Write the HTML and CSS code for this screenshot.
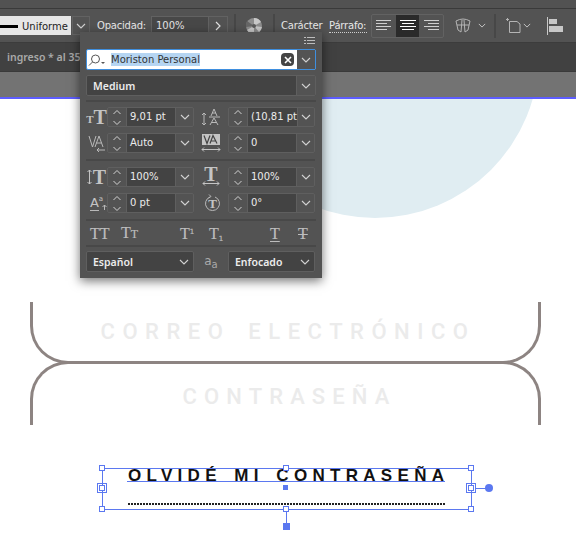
FILE: index.html
```html
<!DOCTYPE html>
<html lang="en">
<head>
  <meta charset="UTF-8">
  <title>Carácter</title>
  <link rel="stylesheet" href="styles.css">
</head>
<body>
  <svg width="0" height="0" class="defs">
    <symbol id="chev" viewBox="0 0 10 6"><path d="M1 1l4 4 4-4" fill="none" stroke="#d2d2d2" stroke-width="1.1"/></symbol>
    <symbol id="updown" viewBox="0 0 10 17"><path d="M1.500 5L5 1.500 8.500 5M1.500 12L5 15.500 8.500 12" fill="none" stroke="#d2d2d2" stroke-width="1"/></symbol>
  </svg>

  <div class="app">
    <div class="topstrip"></div>
    <div class="toolbar">
      <div class="stroke-select"><span class="stroke-line"></span>Uniforme</div>
      <div class="tool-btn"><svg width="10" height="6"><use href="#chev"/></svg></div>
      <span class="label label-opacity">Opacidad:</span>
      <div class="opacity-field">
        <span class="opacity-val">100%</span>
        <span class="opacity-arrow"><svg width="6" height="10" viewBox="0 0 6 10"><path d="M1 1l4 4-4 4" fill="none" stroke="#e0e0e0" stroke-width="1.200"/></svg></span>
      </div>
      <span class="sep ml6"></span>
      <svg class="ml10" width="16" height="16" viewBox="0 0 16 16">
        <circle cx="8" cy="8" r="8" fill="#8e8e8e"/>
        <path d="M8 8L8 0A8 8 0 0 1 15 4zM8 8L1 12A8 8 0 0 0 8 16zM8 8L16 9A8 8 0 0 1 13 14z" fill="#c9c9c9"/>
        <path d="M8 8L1 3A8 8 0 0 0 0 9z" fill="#666"/>
        <circle cx="8" cy="8" r="2" fill="#5a5a5a"/>
      </svg>
      <span class="sep ml11"></span>
      <span class="label label-char">Carácter</span>
      <span class="label label-para">Párrafo:</span>
      <div class="align-group">
        <span class="align-btn">
          <svg width="16" height="12" viewBox="0 0 16 12"><path d="M0 .5h15M0 3.500h11M0 6.500h15M0 9.500h11" stroke="#cfcfcf"/></svg>
        </span>
        <span class="align-btn active">
          <svg width="16" height="12" viewBox="0 0 16 12"><path d="M0 .5h16M2 3.500h12M0 6.500h16M2 9.500h12" stroke="#fff"/></svg>
        </span>
        <span class="align-btn">
          <svg width="16" height="12" viewBox="0 0 16 12"><path d="M1 .5h15M5 3.500h11M1 6.500h15M5 9.500h11" stroke="#cfcfcf"/></svg>
        </span>
      </div>
      <svg class="ml11" width="16" height="15" viewBox="0 0 16 15" fill="none" stroke="#b4b4b4">
        <path d="M1 3Q8 -1 15 3L13 12L10 14L9 2M1 3L3 12L6 14L7 2M2 7H14"/>
      </svg>
      <svg class="ml7" width="8" height="5"><use href="#chev"/></svg>
      <span class="sep ml8"></span>
      <svg class="ml10" width="15" height="15" viewBox="0 0 15 15" fill="none" stroke="#b4b4b4">
        <path d="M3.500 3.500H11L14 6V14.500H3.500ZM0 1.500H3M1.500 0V3"/>
      </svg>
      <svg class="ml2" width="8" height="5"><use href="#chev"/></svg>
      <svg class="ml16" width="16" height="18" viewBox="0 0 16 18">
        <path d="M.5 0V18" stroke="#c8c8c8"/><path d="M2 2h8v5H2zM2 9h14v6H2z" fill="#c8c8c8"/>
      </svg>
    </div>
    <div class="tabbar"><span class="tab-name">ingreso * al 35</span></div>
    <div class="greybar"></div>

    <div class="canvas">
      <div class="circle"></div>
      <div class="field field-one"><span class="field-text">CORREO ELECTRÓNICO</span></div>
      <div class="field field-two"><span class="field-text">CONTRASEÑA</span></div>
      <div class="link-box">
        <span class="link-text">OLVIDÉ MI CONTRASEÑA</span>
        <span class="link-dots"></span>
      </div>
    </div>
  </div>

  <div class="panel">
    <div class="panel-menu">
      <svg width="11" height="8" viewBox="0 0 11 8"><path d="M3 .5h8M3 3.500h8M3 6.500h8M0 .5h2M0 3.500h2M0 6.500h2" stroke="#bdbdbd"/></svg>
    </div>
    <div class="font-search">
      <svg class="lens" width="18" height="12" viewBox="0 0 18 12" fill="none" stroke="#555"><circle cx="7.500" cy="5" r="4"/><path d="M4.500 8L1 11.500"/><path d="M13 8h4l-2 2z" fill="#555" stroke="none"/></svg>
      <span class="font-name">Moriston Personal</span>
      <span class="clear-x"><svg width="8" height="8" viewBox="0 0 8 8"><path d="M1 1l6 6M7 1l-6 6" stroke="#fff" stroke-width="1.600"/></svg></span>
      <span class="search-chev"><svg width="10" height="6"><use href="#chev"/></svg></span>
    </div>
    <div class="select style-select"><span class="select-text">Medium</span><span class="select-chev"><svg width="10" height="6"><use href="#chev"/></svg></span></div>
    <div class="rule"></div>

    <div class="grid">
      <span class="icon-cell"><span class="t-small">T</span><span class="t-big">T</span></span>
      <div class="spin"><span class="spin-btn"><svg width="10" height="17"><use href="#updown"/></svg></span><span class="spin-val">9,01 pt</span><span class="spin-chev"><svg width="10" height="6"><use href="#chev"/></svg></span></div>
      <span class="icon-cell">
        <svg width="20" height="20" viewBox="0 0 20 20" fill="none" stroke="#b9b9b9"><path d="M3 6V18M1 8l2-2 2 2M1 16l2 2 2-2M10 9l3-7 3 7M11 6h4M9 18l4-7 4 7M10.500 15.500h5M8 10h11"/></svg>
      </span>
      <div class="spin"><span class="spin-btn"><svg width="10" height="17"><use href="#updown"/></svg></span><span class="spin-val">(10,81 pt</span><span class="spin-chev"><svg width="10" height="6"><use href="#chev"/></svg></span></div>

      <span class="icon-cell">
        <svg width="18" height="18" viewBox="0 0 18 18" fill="none" stroke="#b9b9b9"><path d="M1 2l3.500 11L8 2M7 13L11 2l4 11M8.500 9h5M9 16h8M11 14l-2 2 2 2" /></svg>
      </span>
      <div class="spin"><span class="spin-btn"><svg width="10" height="17"><use href="#updown"/></svg></span><span class="spin-val">Auto</span><span class="spin-chev"><svg width="10" height="6"><use href="#chev"/></svg></span></div>
      <span class="icon-cell">
        <svg width="20" height="18" viewBox="0 0 20 18"><rect x="1" y="0" width="18" height="11" fill="#c4c4c4"/><path d="M3 1.500l3 8 3-8M9 9.500l3-8 4 8M10.500 7h4" fill="none" stroke="#444" stroke-width="1.200"/><path d="M1 15.500h18M3 13.500l-2 2 2 2M17 13.500l2 2-2 2" fill="none" stroke="#c4c4c4"/></svg>
      </span>
      <div class="spin"><span class="spin-btn"><svg width="10" height="17"><use href="#updown"/></svg></span><span class="spin-val">0</span><span class="spin-chev"><svg width="10" height="6"><use href="#chev"/></svg></span></div>

      <div class="grid-rule"></div>

      <span class="icon-cell"><svg class="v-arrow" width="5" height="16" viewBox="0 0 5 16" fill="none" stroke="#c4c4c4"><path d="M2.500 1V15M.5 3l2-2 2 2M.5 13l2 2 2-2"/></svg><span class="t-big">T</span></span>
      <div class="spin"><span class="spin-btn"><svg width="10" height="17"><use href="#updown"/></svg></span><span class="spin-val">100%</span><span class="spin-chev"><svg width="10" height="6"><use href="#chev"/></svg></span></div>
      <span class="icon-cell col"><span class="t-big t-tight">T</span><svg width="18" height="5" viewBox="0 0 18 5" fill="none" stroke="#c4c4c4"><path d="M1 2.500h16M3 .5l-2 2 2 2M15 .5l2 2-2 2"/></svg></span>
      <div class="spin"><span class="spin-btn"><svg width="10" height="17"><use href="#updown"/></svg></span><span class="spin-val">100%</span><span class="spin-chev"><svg width="10" height="6"><use href="#chev"/></svg></span></div>

      <span class="icon-cell baseline"><span class="a-big">A</span><span class="a-small">a</span><svg class="base-arrow" width="5" height="6" viewBox="0 0 5 6" fill="none" stroke="#b9b9b9"><path d="M2.500 6V1M.5 3l2-2 2 2"/></svg></span>
      <div class="spin"><span class="spin-btn"><svg width="10" height="17"><use href="#updown"/></svg></span><span class="spin-val">0 pt</span><span class="spin-chev"><svg width="10" height="6"><use href="#chev"/></svg></span></div>
      <span class="icon-cell rotate">
        <svg width="17" height="18" viewBox="0 0 17 18" fill="none" stroke="#b9b9b9"><path d="M6 3A7 7 0 1 0 11 3M5 .5l2 2-2.500 1.500"/></svg>
        <span class="t-rot">T</span>
      </span>
      <div class="spin"><span class="spin-btn"><svg width="10" height="17"><use href="#updown"/></svg></span><span class="spin-val">0°</span><span class="spin-chev"><svg width="10" height="6"><use href="#chev"/></svg></span></div>
    </div>

    <div class="rule rule-a"></div>
    <div class="style-row">
      <span class="st st-tt">TT</span>
      <span class="st st-tr">T<small>T</small></span>
      <span class="st st-sup">T<sup>1</sup></span>
      <span class="st st-sub">T<sub>1</sub></span>
      <span class="st st-under">T</span>
      <span class="st st-strike">T</span>
    </div>
    <div class="rule rule-b"></div>
    <div class="bottom-row">
      <div class="select lang"><span class="select-text">Español</span><span class="select-chev plain"><svg width="10" height="6"><use href="#chev"/></svg></span></div>
      <span class="aa-icon">a<b>a</b></span>
      <div class="select aa"><span class="select-text">Enfocado</span><span class="select-chev plain"><svg width="10" height="6"><use href="#chev"/></svg></span></div>
    </div>
  </div>

  <span class="h-frame"></span>
  <span class="h-under"></span>
  <span class="h h-top"></span>
  <span class="h h-tl"></span>
  <span class="h h-tr"></span>
  <span class="h h-bl"></span>
  <span class="h h-bm"></span>
  <span class="h h-br"></span>
  <span class="h h-ml"></span>
  <span class="h h-mr"></span>
  <span class="h-outer h-oml"></span>
  <span class="h-outer h-omr"></span>
  <span class="h-center"></span>
  <span class="h-stem"></span>
  <span class="h-foot"></span>
  <span class="h-wire"></span>
  <span class="h-dot"></span>
</body>
</html>
```
FILE: styles.css
```css
html, body {
  margin: 0;
  padding: 0;
}
body {
  position: relative;
  width: 576px;
  height: 538px;
  overflow: hidden;
  background: #fff;
  font-family: "DejaVu Sans", sans-serif;
  font-size: 10px;
  color: #e4e4e4;
}
.defs {
  position: absolute;
}
svg {
  display: block;
  flex: none;
}
.topstrip {
  height: 8px;
  background: #525252;
  border-bottom: 1px solid #3a3a3a;
}
.toolbar {
  display: flex;
  align-items: center;
  height: 33px;
  background: #535353;
  border-bottom: 1px solid #3c3c3c;
}
.ml2 { margin-left: 2px; }
.ml6 { margin-left: 6px; }
.ml7 { margin-left: 7px; }
.ml8 { margin-left: 8px; }
.ml10 { margin-left: 10px; }
.ml11 { margin-left: 11px; }
.ml16 { margin-left: 16px; }
.stroke-select {
  display: flex;
  align-items: center;
  box-sizing: border-box;
  width: 71px;
  height: 19px;
  padding-top: 1px;
  background: #e6e6e6;
  color: #222;
  flex: none;
}
.stroke-line {
  width: 18px;
  height: 3px;
  margin-right: 4px;
  background: #000;
}
.tool-btn {
  display: flex;
  align-items: center;
  justify-content: center;
  width: 18px;
  height: 19px;
  margin-left: 1px;
  border: 1px solid #626262;
  box-sizing: border-box;
  flex: none;
}
.label {
  flex: none;
  box-sizing: border-box;
  margin-top: 2px;
  color: #e8e8e8;
  border-bottom: 1px dotted #cfcfcf;
  line-height: 12px;
  letter-spacing: -0.2px;
  white-space: nowrap;
}
.label-opacity { width: 49px; margin-left: 7px; }
.label-char { width: 41px; margin-left: 6px; }
.label-para { width: 38px; margin-left: 7px; }
.opacity-field {
  display: flex;
  align-items: center;
  width: 77px;
  height: 19px;
  margin-left: 5px;
  border: 1px solid #626262;
  box-sizing: border-box;
  background: #484848;
  flex: none;
}
.opacity-val {
  flex: 1;
  padding-left: 4px;
}
.opacity-arrow {
  display: flex;
  align-items: center;
  justify-content: center;
  width: 18px;
  height: 100%;
  background: #535353;
  border-left: 1px solid #626262;
}
.sep {
  width: 2px;
  height: 24px;
  background: #474747;
  flex: none;
}
.align-group {
  display: flex;
  box-sizing: border-box;
  width: 73px;
  height: 24px;
  margin-left: 4px;
  border: 1px solid #626262;
  border-radius: 2px;
  flex: none;
}
.align-btn {
  display: flex;
  align-items: center;
  justify-content: center;
  flex: 1;
}
.align-btn.active {
  background: #2a2a2a;
}
.tabbar {
  display: flex;
  align-items: center;
  height: 28px;
  background: #414141;
  border-bottom: 1px solid #3a3a3a;
}
.tab-name {
  margin-left: 7px;
  font-family: "Noto Sans", sans-serif;
  font-size: 10.5px;
  font-weight: 600;
  color: #a9a9a9;
}
.greybar {
  height: 25px;
  background: #737373;
  border-bottom: 2px solid #5d5dff;
}
.canvas {
  position: relative;
  height: 439px;
  overflow: hidden;
}
.circle {
  position: absolute;
  left: 211px;
  top: -209px;
  width: 328px;
  height: 328px;
  border-radius: 50%;
  background: #e0edf2;
}
.field {
  position: relative;
  display: flex;
  align-items: center;
  justify-content: center;
  box-sizing: border-box;
  width: 511px;
  margin-left: 30px;
  border: 0 solid #8d8482;
  border-width: 0 3px;
  font-family: Roboto, sans-serif;
  font-size: 22px;
  font-weight: 500;
  color: #ebebeb;
}
.field-one {
  height: 62px;
  margin-top: 203px;
  padding-left: 5px;
  border-bottom-width: 3px;
  border-radius: 0 0 38px 38px;
  letter-spacing: 7.5px;
  word-spacing: 5px;
}
.field-two {
  height: 64px;
  margin-top: -3px;
  padding: 4px 0 0 8px;
  border-top-width: 3px;
  border-radius: 38px 38px 0 0;
  letter-spacing: 7.1px;
}
.link-box {
  display: flex;
  flex-direction: column;
  padding-left: 128px;
  margin-top: 42px;
}
.link-text {
  font-family: "Liberation Sans", sans-serif;
  font-weight: bold;
  font-size: 17px;
  line-height: 17px;
  letter-spacing: 5.3px;
  word-spacing: 2.5px;
  color: #111;
  white-space: nowrap;
}
.link-dots {
  width: 318px;
  height: 2px;
  margin-top: 19px;
  background: repeating-linear-gradient(90deg, #222 0 2px, transparent 2px 3px);
}

/* floating panel */
.panel {
  position: absolute;
  left: 80px;
  top: 32px;
  box-sizing: border-box;
  width: 242px;
  height: 246px;
  padding: 0 6px;
  background: #535353;
  box-shadow: 0 3px 10px rgba(0, 0, 0, 0.55);
}
.panel-menu {
  display: flex;
  justify-content: flex-end;
  height: 17px;
  padding: 5px 1px 0 0;
  box-sizing: border-box;
}
.font-search {
  display: flex;
  align-items: center;
  box-sizing: border-box;
  height: 21px;
  background: #fff;
  border: 1px solid #3f8fdf;
  border-radius: 2px;
  color: #333;
}
.lens {
  margin: 0 5px 0 1px;
}
.font-name {
  flex: none;
  background: #b5d5f2;
  line-height: 13px;
}
.clear-x {
  display: flex;
  align-items: center;
  justify-content: center;
  width: 13px;
  height: 13px;
  margin-left: auto;
  margin-right: 3px;
  background: #444;
  border-radius: 4px;
}
.search-chev {
  display: flex;
  align-items: center;
  justify-content: center;
  width: 18px;
  height: 100%;
  background: #535353;
}
.select {
  display: flex;
  align-items: center;
  box-sizing: border-box;
  height: 21px;
  background: #434343;
  border: 1px solid #5f5f5f;
  border-radius: 2px;
}
.style-select {
  margin-top: 5px;
}
.select-text {
  flex: 1;
  padding-left: 6px;
  font-family: "Noto Sans", sans-serif;
  font-size: 10.5px;
  font-weight: 600;
  color: #ececec;
}
.select-chev {
  display: flex;
  align-items: center;
  justify-content: center;
  width: 18px;
  height: 100%;
  background: #535353;
  border-left: 1px solid #5f5f5f;
}
.select-chev.plain {
  background: none;
  border: none;
}
.rule {
  height: 2px;
  margin-top: 4px;
  background: #484848;
}
.grid {
  display: grid;
  grid-template-columns: 21px 87px 34px 87px;
  grid-auto-rows: auto;
  row-gap: 6px;
  margin-top: 5px;
}
.grid-rule {
  grid-column: 1 / -1;
  height: 2px;
  background: #484848;
}
.icon-cell {
  position: relative;
  display: flex;
  align-items: center;
  justify-content: center;
  height: 20px;
  color: #c4c4c4;
  font-family: "Liberation Serif", serif;
  font-weight: bold;
}
.icon-cell.col {
  flex-direction: column;
}
.t-small {
  font-size: 11px;
  align-self: flex-end;
  line-height: 15px;
}
.t-big {
  font-size: 20px;
  line-height: 19px;
}
.t-tight {
  line-height: 13px;
}
.v-arrow {
  margin-right: 1px;
}
.a-big {
  font-family: "DejaVu Sans", sans-serif;
  font-weight: normal;
  font-size: 13px;
  border-bottom: 1px solid #b9b9b9;
  line-height: 14px;
}
.a-small {
  font-family: "DejaVu Sans", sans-serif;
  font-weight: normal;
  font-size: 7px;
  align-self: flex-start;
  margin-top: 2px;
}
.base-arrow {
  position: absolute;
  right: 0;
  bottom: 3px;
}
.t-rot {
  position: absolute;
  left: 0;
  right: -3px;
  top: 4px;
  text-align: center;
  font-size: 13px;
  line-height: 14px;
}
.rotate svg {
  margin-left: 3px;
}
.spin {
  display: flex;
  box-sizing: border-box;
  height: 20px;
  border: 1px solid #5f5f5f;
  border-radius: 2px;
  background: #535353;
}
.spin-btn {
  display: flex;
  align-items: center;
  justify-content: center;
  width: 18px;
  flex: none;
}
.spin-val {
  flex: 1;
  padding-left: 3px;
  line-height: 18px;
  background: #434343;
  border-left: 1px solid #5f5f5f;
  border-right: 1px solid #5f5f5f;
  color: #ececec;
  white-space: nowrap;
}
.spin-chev {
  display: flex;
  align-items: center;
  justify-content: center;
  width: 17px;
  flex: none;
}
.rule-a {
  margin-top: 6px;
}
.style-row {
  display: flex;
  align-items: center;
  height: 24px;
  font-family: "Liberation Serif", serif;
  font-size: 16px;
  color: #bdbdbd;
  -webkit-text-stroke: 0.2px #bdbdbd;
}
.st {
  line-height: 15px;
}
.st small {
  font-size: 12px;
}
.st sup, .st sub {
  font-size: 7px;
  font-family: "DejaVu Sans", sans-serif;
}
.st sup { vertical-align: 5px; line-height: 0; }
.st sub { vertical-align: -2px; line-height: 0; }
.st-tt { margin-left: 4px; width: 31px; }
.st-tr { width: 59px; }
.st-sup { width: 29px; }
.st-sub { width: 61px; }
.st-under { width: 28px; text-decoration: underline; text-underline-offset: 2px; }
.st-strike { text-decoration: line-through; }
.rule-b {
  margin-top: 0;
}
.bottom-row {
  display: grid;
  grid-template-columns: 108px 34px 87px;
  align-items: center;
  margin-top: 4px;
}
.aa-icon {
  text-align: center;
  font-size: 12px;
  color: #aaa;
}
.aa-icon b {
  font-size: 10px;
  font-weight: normal;
  vertical-align: -3px;
}

/* selection frame on the canvas */
.h, .h-center, .h-foot, .h-outer, .h-stem, .h-wire, .h-dot, .h-frame, .h-under {
  position: absolute;
  box-sizing: border-box;
}
.h-frame {
  left: 102px;
  top: 468px;
  width: 370px;
  height: 42px;
  border: 1px solid #5b78f0;
}
.h-under {
  left: 127px;
  top: 481px;
  width: 318px;
  height: 1px;
  background: #5b78f0;
}
.h {
  width: 6px;
  height: 6px;
  background: #fff;
  border: 1px solid #5b78f0;
}
.h-top { left: 283px; top: 465px; }
.h-tl { left: 99px; top: 465px; }
.h-tr { left: 468px; top: 465px; }
.h-bl { left: 99px; top: 506px; }
.h-bm { left: 283px; top: 506px; }
.h-br { left: 468px; top: 506px; }
.h-ml { left: 99px; top: 485px; }
.h-mr { left: 468px; top: 485px; }
.h-outer {
  width: 10px;
  height: 10px;
  border: 1px solid #5b78f0;
}
.h-oml { left: 97px; top: 483px; }
.h-omr { left: 466px; top: 483px; }
.h-center {
  left: 283px;
  top: 485px;
  width: 5px;
  height: 5px;
  background: #5b78f0;
}
.h-stem {
  left: 286px;
  top: 512px;
  width: 1px;
  height: 12px;
  background: #5b78f0;
}
.h-foot {
  left: 283px;
  top: 523px;
  width: 7px;
  height: 7px;
  background: #5b78f0;
}
.h-wire {
  left: 476px;
  top: 488px;
  width: 10px;
  height: 1px;
  background: #5b78f0;
}
.h-dot {
  left: 485px;
  top: 484px;
  width: 8px;
  height: 8px;
  border-radius: 50%;
  background: #5b78f0;
}
```
